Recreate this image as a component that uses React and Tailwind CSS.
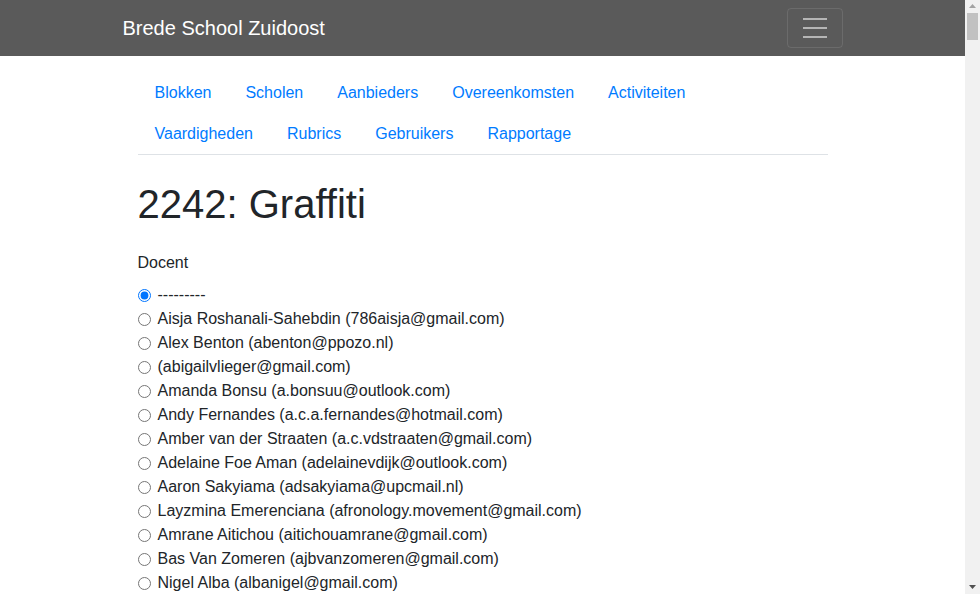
import React from 'react';

const links = [
  ['Blokken', 'Scholen', 'Aanbieders', 'Overeenkomsten', 'Activiteiten'],
  ['Vaardigheden', 'Rubrics', 'Gebruikers', 'Rapportage'],
];

const docenten = [
  '---------',
  'Aisja Roshanali-Sahebdin (786aisja@gmail.com)',
  'Alex Benton (abenton@ppozo.nl)',
  '(abigailvlieger@gmail.com)',
  'Amanda Bonsu (a.bonsuu@outlook.com)',
  'Andy Fernandes (a.c.a.fernandes@hotmail.com)',
  'Amber van der Straaten (a.c.vdstraaten@gmail.com)',
  'Adelaine Foe Aman (adelainevdijk@outlook.com)',
  'Aaron Sakyiama (adsakyiama@upcmail.nl)',
  'Layzmina Emerenciana (afronology.movement@gmail.com)',
  'Amrane Aitichou (aitichouamrane@gmail.com)',
  'Bas Van Zomeren (ajbvanzomeren@gmail.com)',
  'Nigel Alba (albanigel@gmail.com)',
];

function Scrollbar() {
  return (
    <div className="flex w-[15px] shrink-0 flex-col items-center bg-[#f1f1f1]">
      <svg width="15" height="13" viewBox="0 0 15 13">
        <path d="M7.5 4 L11 8 L4 8 Z" fill="#a3a3a3" />
      </svg>
      <div className="h-[27px] w-[11px] bg-[#c1c1c1]"></div>
      <div className="flex-1"></div>
      <svg width="15" height="13" viewBox="0 0 15 13">
        <path d="M4 4 L11 4 L7.5 8 Z" fill="#505050" />
      </svg>
    </div>
  );
}

export default function App() {
  return (
    <div className="flex h-[594px] overflow-hidden bg-white text-[#212529] font-['Liberation_Sans',Arial,sans-serif] text-base">
      <div className="min-w-0 flex-1 overflow-hidden">
        <nav className="h-14 bg-[#5a5a5a]">
          <div className="mx-auto flex h-full w-[720px] items-center justify-between">
            <span className="text-[20px] text-white">Brede School Zuidoost</span>
            <button className="flex h-10 w-14 flex-col items-center justify-center gap-[7px] rounded border border-white/10">
              <span className="block h-[2px] w-6 bg-white/55"></span>
              <span className="block h-[2px] w-6 bg-white/55"></span>
              <span className="block h-[2px] w-6 bg-white/55"></span>
            </button>
          </div>
        </nav>
        <div className="mx-auto w-[720px] px-[15px]">
          <ul className="mt-[17px] border-b border-[#dee2e6]">
            {links.map((row, i) => (
              <li key={i} className={i === 0 ? 'flex pb-px' : 'flex'}>
                {row.map((l) => (
                  <a key={l} href="#" className="px-[17px] py-2 leading-6 text-[#007bff]">
                    {l}
                  </a>
                ))}
              </li>
            ))}
          </ul>
          <h1 className="mt-[25px] mb-2 text-[40px] leading-[48px] font-medium">2242: Graffiti</h1>
          <div className="mt-[23px]">
            <label className="mb-2 block leading-6">Docent</label>
            <div>
              {docenten.map((d, i) => (
                <label key={i} className="flex h-6 items-center leading-6">
                  <input
                    type="radio"
                    name="docent"
                    defaultChecked={i === 0}
                    className="m-0 mr-[7px] h-[13px] w-[13px]"
                  />
                  {d}
                </label>
              ))}
            </div>
          </div>
        </div>
      </div>
      <Scrollbar />
    </div>
  );
}
